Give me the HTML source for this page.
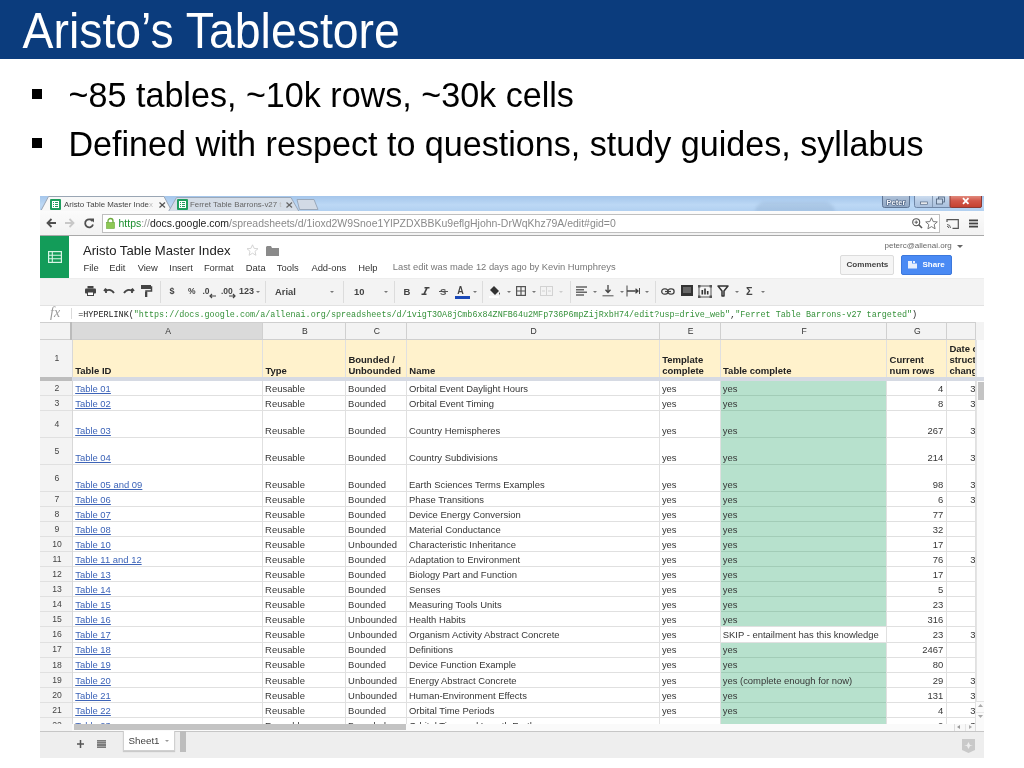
<!DOCTYPE html><html><head><meta charset="utf-8"><style>
*{margin:0;padding:0;box-sizing:border-box}
html,body{width:1024px;height:768px;overflow:hidden;background:#fff;font-family:"Liberation Sans",sans-serif}
.a{position:absolute}
.t{position:absolute;white-space:nowrap;line-height:1}
.c{position:absolute;white-space:nowrap;line-height:1;font-size:9.35px;color:#363636}
.b{font-weight:bold}
.lk{color:#3D64B8;text-decoration:underline}
svg{position:absolute;overflow:visible}
</style></head><body>
<div class="a" style="left:0;top:0;width:1024px;height:58.6px;background:#0B3C7D"></div>
<div class="t" style="left:22.5px;top:8.5px;font-size:46.4px;color:#fff;transform:scaleY(1.06);transform-origin:0 39.28px">Aristo’s Tablestore</div>
<div class="a" style="left:32px;top:89px;width:10px;height:10px;background:#000"></div>
<div class="a" style="left:32px;top:138px;width:10px;height:10px;background:#000"></div>
<div class="t" style="left:68.6px;top:77.7px;font-size:34.12px;color:#000;transform:scaleY(1.04);transform-origin:0 28.78px">~85 tables, ~10k rows, ~30k cells</div>
<div class="t" style="left:68.4px;top:127.2px;font-size:34.12px;color:#000;transform:scaleY(1.04);transform-origin:0 28.78px">Defined with respect to questions, study guides, syllabus</div>
<div class="a" style="left:40px;top:196px;width:944px;height:562.5px;background:#fff;overflow:hidden;filter:blur(0.35px)">
<div class="a" style="left:0px;top:0px;width:944px;height:15.5px;background:linear-gradient(#A5C6EB,#BCD8F5 55%,#B0CFF0)"></div>
<div class="a" style="left:715px;top:6px;width:80px;height:10px;background:rgba(70,100,140,0.13);border-radius:40px 40px 0 0;filter:blur(1.5px)"></div>
<svg style="left:0px;top:0px;" width="140" height="16" viewBox="0 0 140 16"><path d="M0.5 15.5 L8.5 0.5 L124 0.5 L132 15.5 Z" fill="#F8F8F8" stroke="#9AA6B4" stroke-width="1"/><rect x="0" y="14" width="140" height="2" fill="#F8F8F8"/></svg>
<svg style="left:128px;top:0px;" width="140" height="16" viewBox="0 0 140 16"><path d="M0.5 15.5 L8.5 1.5 L123 1.5 L131 15.5 Z" fill="#D5DDE7" stroke="#9AA8BA" stroke-width="1"/></svg>
<svg style="left:256px;top:0px;" width="30" height="16" viewBox="0 0 30 16"><path d="M3.5 13.5 L1 3.5 L18 3.5 L22 13.5 Z" fill="#D2DAE5" stroke="#9AA8BA" stroke-width="1"/></svg>
<svg style="left:10px;top:3px;" width="11" height="11" viewBox="0 0 11 11"><rect x="0" y="0" width="11" height="11" rx="1" fill="#1E9E5E"/><rect x="2.5" y="2.5" width="6" height="6" fill="none" stroke="#fff" stroke-width="1"/><line x1="2.5" y1="4.5" x2="8.5" y2="4.5" stroke="#fff" stroke-width="1"/><line x1="2.5" y1="6.5" x2="8.5" y2="6.5" stroke="#fff" stroke-width="1"/><line x1="4.5" y1="2.5" x2="4.5" y2="8.5" stroke="#fff" stroke-width="1"/></svg>
<div class="t" style="left:24px;top:4.800000000000011px;font-size:7.9px;color:#444">Aristo Table Master Inde<span style="color:#bbb">x</span></div>
<svg style="left:119px;top:6px;" width="7" height="6" viewBox="0 0 7 6"><path d="M0.5 0.5 L6 5.5 M6 0.5 L0.5 5.5" stroke="#555" stroke-width="1.2"/></svg>
<svg style="left:137px;top:3px;" width="11" height="11" viewBox="0 0 11 11"><rect x="0" y="0" width="11" height="11" rx="1" fill="#1E9E5E"/><rect x="2.5" y="2.5" width="6" height="6" fill="none" stroke="#fff" stroke-width="1"/><line x1="2.5" y1="4.5" x2="8.5" y2="4.5" stroke="#fff" stroke-width="1"/><line x1="2.5" y1="6.5" x2="8.5" y2="6.5" stroke="#fff" stroke-width="1"/><line x1="4.5" y1="2.5" x2="4.5" y2="8.5" stroke="#fff" stroke-width="1"/></svg>
<div class="t" style="left:150px;top:4.800000000000011px;font-size:7.9px;color:#666">Ferret Table Barrons-v27 <span style="color:#bbb">t</span></div>
<svg style="left:246px;top:6px;" width="7" height="6" viewBox="0 0 7 6"><path d="M0.5 0.5 L6 5.5 M6 0.5 L0.5 5.5" stroke="#666" stroke-width="1.2"/></svg>
<svg style="left:842px;top:0px;" width="102" height="13" viewBox="0 0 102 13"><defs><linearGradient id="gb" x1="0" y1="0" x2="0" y2="1"><stop offset="0" stop-color="#D5E3F3"/><stop offset="0.5" stop-color="#B9CDE6"/><stop offset="1" stop-color="#A9C0DD"/></linearGradient><linearGradient id="gp" x1="0" y1="0" x2="0" y2="1"><stop offset="0" stop-color="#B4C6DC"/><stop offset="1" stop-color="#8FA6C4"/></linearGradient><linearGradient id="gr" x1="0" y1="0" x2="0" y2="1"><stop offset="0" stop-color="#E7A092"/><stop offset="0.5" stop-color="#D2574A"/><stop offset="1" stop-color="#C4402F"/></linearGradient></defs><rect x="0.5" y="-2" width="27" height="13.5" rx="2" fill="url(#gp)" stroke="#5F7594"/><text x="14" y="9" font-family="Liberation Sans" font-size="7.5" font-weight="bold" fill="#F4F7FB" stroke="#44597A" stroke-width="1.1" paint-order="stroke" text-anchor="middle">Peter</text><rect x="32.5" y="-2" width="67" height="13.5" rx="2" fill="url(#gb)" stroke="#6F86A6"/><line x1="50.5" y1="-2" x2="50.5" y2="11" stroke="#8499B3"/><rect x="68" y="-2" width="31.5" height="13.5" rx="1.5" fill="url(#gr)" stroke="#8B3A35"/><rect x="38.5" y="6" width="7" height="2.2" fill="#fff" stroke="#4d5f78" stroke-width="0.7"/><rect x="56.5" y="1" width="6" height="5" fill="none" stroke="#4d5f78" stroke-width="0.8"/><rect x="54.5" y="3" width="6" height="5" fill="#C9D8EA" stroke="#4d5f78" stroke-width="0.8"/><path d="M81 2.2 L86.5 7.8 M86.5 2.2 L81 7.8" stroke="#fff" stroke-width="1.8"/></svg>
<div class="a" style="left:0px;top:15px;width:944px;height:24px;background:linear-gradient(#FBFBFB,#F2F2F2)"></div>
<div class="a" style="left:0px;top:39px;width:944px;height:1px;background:#A9A9A9"></div>
<div class="a" style="left:62px;top:18px;width:838px;height:19px;background:#fff;border:1px solid #BFBFBF"></div>
<svg style="left:6px;top:22px;" width="11" height="10" viewBox="0 0 11 10"><path d="M10 5 L1.5 5 M5.5 1 L1.5 5 L5.5 9" fill="none" stroke="#505050" stroke-width="1.8"/></svg>
<svg style="left:24px;top:22px;" width="11" height="10" viewBox="0 0 11 10"><path d="M1 5 L9.5 5 M5.5 1 L9.5 5 L5.5 9" fill="none" stroke="#C8C8C8" stroke-width="1.8"/></svg>
<svg style="left:44px;top:22px;" width="11" height="11" viewBox="0 0 11 11"><path d="M8.6 3.2 A4 4 0 1 0 9 6.5" fill="none" stroke="#505050" stroke-width="1.8"/><path d="M6 0.5 L10 0.5 L10 4.5 Z" fill="#505050"/></svg>
<svg style="left:66px;top:22px;" width="9" height="11" viewBox="0 0 9 11"><path d="M2 5 L2 3 A2.5 2.5 0 0 1 7 3 L7 5" fill="none" stroke="#6BAA3B" stroke-width="1.3"/><rect x="0.5" y="4.5" width="8" height="6" fill="#8DC855" stroke="#6BAA3B" stroke-width="0.6"/></svg>
<div class="t" style="left:78.5px;top:22.5px;font-size:10.48px"><span style="color:#1B8E2E">https</span><span style="color:#999">://</span><span style="color:#222">docs.google.com</span><span style="color:#8A8A8A">/spreadsheets/d/1ioxd2W9Snoe1YlPZDXBBKu9eflgHjohn-DrWqKhz79A/edit#gid=0</span></div>
<svg style="left:872px;top:22px;" width="11" height="11" viewBox="0 0 11 11"><circle cx="4.2" cy="4.2" r="3.5" fill="none" stroke="#555" stroke-width="1.1"/><path d="M2.5 4.2 L6 4.2 M4.2 2.5 L4.2 6" stroke="#555" stroke-width="0.9"/><path d="M6.8 6.8 L10 10" stroke="#555" stroke-width="1.6"/></svg>
<svg style="left:885px;top:21px;" width="13" height="13" viewBox="0 0 13 13"><path d="M6.5 0.8 L8.2 4.6 L12.3 4.9 L9.2 7.6 L10.1 11.8 L6.5 9.6 L2.9 11.8 L3.8 7.6 L0.7 4.9 L4.8 4.6 Z" fill="#fff" stroke="#6A6A6A" stroke-width="0.9"/></svg>
<svg style="left:906px;top:23px;" width="13" height="10" viewBox="0 0 13 10"><path d="M1 3 L1 0.7 L12.3 0.7 L12.3 9.3 L6.5 9.3" fill="none" stroke="#555" stroke-width="1.2"/><path d="M1 5.5 A3.5 3.5 0 0 1 4.5 9 M1 7.3 A1.7 1.7 0 0 1 2.7 9" fill="none" stroke="#555" stroke-width="0.9"/></svg>
<svg style="left:929px;top:23px;" width="9" height="9" viewBox="0 0 9 9"><rect x="0" y="0.5" width="9" height="1.8" fill="#444"/><rect x="0" y="3.6" width="9" height="1.8" fill="#444"/><rect x="0" y="6.7" width="9" height="1.8" fill="#444"/></svg>
<div class="a" style="left:0px;top:39.5px;width:29px;height:43.5px;background:#139C59"></div>
<svg style="left:8px;top:55px;" width="14" height="12" viewBox="0 0 14 12"><rect x="0.6" y="0.6" width="12.8" height="10.8" fill="none" stroke="#D9F5E5" stroke-width="1.2"/><path d="M0.6 4.2 L13.4 4.2 M0.6 7.8 L13.4 7.8 M4.3 0.6 L4.3 11.4" stroke="#D9F5E5" stroke-width="1.1"/></svg>
<div class="t" style="left:43px;top:47.80000000000001px;font-size:13.1px;color:#222">Aristo Table Master Index</div>
<svg style="left:206px;top:48px;" width="13" height="12" viewBox="0 0 13 12"><path d="M6.5 0.8 L8.1 4.4 L12 4.7 L9 7.3 L9.9 11.3 L6.5 9.2 L3.1 11.3 L4 7.3 L1 4.7 L4.9 4.4 Z" fill="none" stroke="#D0D0D0" stroke-width="0.9"/></svg>
<svg style="left:226px;top:50px;" width="13" height="10" viewBox="0 0 13 10"><path d="M0 1 L0 10 L13 10 L13 2 L6 2 L5 0 L1 0 Z" fill="#8A8A8A"/></svg>
<div class="t" style="left:43.5px;top:66.5px;font-size:9.4px;color:#333">File</div>
<div class="t" style="left:69.2px;top:66.5px;font-size:9.4px;color:#333">Edit</div>
<div class="t" style="left:97.69999999999999px;top:66.5px;font-size:9.4px;color:#333">View</div>
<div class="t" style="left:129.3px;top:66.5px;font-size:9.4px;color:#333">Insert</div>
<div class="t" style="left:163.9px;top:66.5px;font-size:9.4px;color:#333">Format</div>
<div class="t" style="left:205.8px;top:66.5px;font-size:9.4px;color:#333">Data</div>
<div class="t" style="left:236.8px;top:66.5px;font-size:9.4px;color:#333">Tools</div>
<div class="t" style="left:271.4px;top:66.5px;font-size:9.4px;color:#333">Add-ons</div>
<div class="t" style="left:318.3px;top:66.5px;font-size:9.4px;color:#333">Help</div>
<div class="t" style="left:352.8px;top:66.5px;font-size:9.35px;color:#777">Last edit was made 12 days ago by Kevin Humphreys</div>
<div class="t" style="left:844.5px;top:45.5px;font-size:8px;color:#666">peterc@allenai.org</div>
<svg style="left:917px;top:49px;" width="6" height="3" viewBox="0 0 6 3"><path d="M0 0 L6 0 L3 3 Z" fill="#666"/></svg>
<div class="a" style="left:800px;top:59px;width:54px;height:20px;background:#F5F5F5;border:1px solid #DCDCDC;border-radius:2px"></div>
<div class="t" style="left:806.5px;top:65.30000000000001px;font-size:8.1px;color:#444;font-weight:bold">Comments</div>
<div class="a" style="left:861px;top:59px;width:51px;height:20px;background:#4A8AF4;border:1px solid #3C78DC;border-radius:2px"></div>
<svg style="left:868px;top:64.5px;" width="9" height="7.5" viewBox="0 0 9 7.5"><path d="M0 0 L4 0 L4 2.5 L9 2.5 L9 7.5 L0 7.5 Z" fill="#E6EEFD"/><rect x="5" y="0" width="2" height="2" fill="#E6EEFD"/></svg>
<div class="t" style="left:882.5px;top:65.30000000000001px;font-size:8px;color:#fff;font-weight:bold">Share</div>
<div class="a" style="left:0px;top:82px;width:944px;height:28px;background:#F3F3F3;border-top:1px solid #EDEDED;border-bottom:1px solid #E2E2E2"></div>
<svg style="left:45px;top:90px;" width="11" height="10" viewBox="0 0 11 10"><rect x="2.5" y="0" width="6" height="2.5" fill="#444"/><rect x="0" y="2.5" width="11" height="5" rx="1" fill="#444"/><rect x="2.5" y="6" width="6" height="3.5" fill="#fff" stroke="#444" stroke-width="1"/></svg>
<svg style="left:63px;top:91px;" width="12" height="8" viewBox="0 0 12 8"><path d="M3 2 L3 6 M1 4 L3 1.5 M3.5 3.5 Q8 1.5 11 6" fill="none" stroke="#444" stroke-width="1.8"/></svg>
<svg style="left:83px;top:91px;" width="12" height="8" viewBox="0 0 12 8"><path d="M9 2 L9 6 M11 4 L9 1.5 M8.5 3.5 Q4 1.5 1 6" fill="none" stroke="#444" stroke-width="1.8"/></svg>
<svg style="left:101px;top:89px;" width="11" height="12" viewBox="0 0 11 12"><rect x="0" y="0" width="10" height="4" fill="#444"/><path d="M10 2 L10.5 2 L10.5 6 L5 6 L5 11" fill="none" stroke="#444" stroke-width="1.5"/><rect x="4" y="7" width="2.3" height="5" fill="#444"/></svg>
<div class="a" style="left:120px;top:85px;width:1px;height:22px;background:#DCDCDC"></div>
<div class="t" style="left:129.5px;top:91px;font-size:9px;color:#444;font-weight:bold">$</div>
<div class="t" style="left:148px;top:91px;font-size:8.5px;color:#444;font-weight:bold">%</div>
<div class="t" style="left:162.5px;top:91px;font-size:8.5px;color:#444;font-weight:bold">.0</div>
<svg style="left:170px;top:98px;" width="6" height="4" viewBox="0 0 6 4"><path d="M0 2 L6 2 M2 0 L0 2 L2 4" fill="none" stroke="#444" stroke-width="1.2"/></svg>
<div class="t" style="left:181px;top:91px;font-size:8.5px;color:#444;font-weight:bold">.00</div>
<svg style="left:189px;top:98px;" width="6" height="4" viewBox="0 0 6 4"><path d="M0 2 L6 2 M4 0 L6 2 L4 4" fill="none" stroke="#444" stroke-width="1.2"/></svg>
<div class="t" style="left:199px;top:90.80000000000001px;font-size:9px;color:#444;font-weight:bold">123</div>
<svg style="left:215.5px;top:95px;" width="4" height="2" viewBox="0 0 4 2"><path d="M0 0 L4 0 L2 2 Z" fill="#777"/></svg>
<div class="a" style="left:225px;top:85px;width:1px;height:22px;background:#DCDCDC"></div>
<div class="t" style="left:235px;top:91px;font-size:9.4px;color:#444;font-weight:bold">Arial</div>
<svg style="left:290px;top:95px;" width="4" height="2" viewBox="0 0 4 2"><path d="M0 0 L4 0 L2 2 Z" fill="#777"/></svg>
<div class="a" style="left:303px;top:85px;width:1px;height:22px;background:#DCDCDC"></div>
<div class="t" style="left:314px;top:91px;font-size:9.4px;color:#444;font-weight:bold">10</div>
<svg style="left:344px;top:95px;" width="4" height="2" viewBox="0 0 4 2"><path d="M0 0 L4 0 L2 2 Z" fill="#777"/></svg>
<div class="a" style="left:354px;top:85px;width:1px;height:22px;background:#DCDCDC"></div>
<div class="t" style="left:363.5px;top:91px;font-size:9.5px;color:#444;font-weight:bold">B</div>
<svg style="left:381px;top:91px;" width="9" height="8" viewBox="0 0 9 8"><path d="M3.5 0.8 L8.5 0.8 M0.5 7.2 L5.5 7.2 M6 0.8 L3 7.2" fill="none" stroke="#444" stroke-width="1.6"/></svg>
<div class="t" style="left:400px;top:90.80000000000001px;font-size:9.5px;color:#555;font-weight:bold">S</div>
<div class="a" style="left:399px;top:94.5px;width:9px;height:1px;background:#555"></div>
<div class="t" style="left:417px;top:90px;font-size:10px;color:#444;font-weight:bold;transform:scaleX(0.9)">A</div>
<div class="a" style="left:415px;top:100px;width:15px;height:2.5px;background:#1A49B8"></div>
<svg style="left:433px;top:95px;" width="4" height="2" viewBox="0 0 4 2"><path d="M0 0 L4 0 L2 2 Z" fill="#777"/></svg>
<div class="a" style="left:442px;top:85px;width:1px;height:22px;background:#DCDCDC"></div>
<svg style="left:449px;top:89px;" width="12" height="13" viewBox="0 0 12 13"><path d="M1 5 L5 1 L10 6 L6 10 Z" fill="#333"/><path d="M10.5 7 Q11.5 9 10.5 10 Q9.5 9 10.5 7Z" fill="#333"/><rect x="0" y="11" width="10" height="2" fill="#fff"/></svg>
<svg style="left:467px;top:95px;" width="4" height="2" viewBox="0 0 4 2"><path d="M0 0 L4 0 L2 2 Z" fill="#777"/></svg>
<svg style="left:476px;top:90px;" width="10" height="10" viewBox="0 0 10 10"><rect x="0.6" y="0.6" width="8.8" height="8.8" fill="none" stroke="#555" stroke-width="1.2"/><path d="M5 0.6 L5 9.4 M0.6 5 L9.4 5" stroke="#555" stroke-width="1.2"/></svg>
<svg style="left:492px;top:95px;" width="4" height="2" viewBox="0 0 4 2"><path d="M0 0 L4 0 L2 2 Z" fill="#777"/></svg>
<svg style="left:500px;top:90px;" width="13" height="10" viewBox="0 0 13 10"><rect x="0.5" y="0.5" width="12" height="9" fill="none" stroke="#D2D2D2" stroke-width="1"/><path d="M6.5 0.5 L6.5 9.5 M2 5 L5 5 M8 5 L11 5" stroke="#D2D2D2" stroke-width="1"/></svg>
<svg style="left:519px;top:95px;" width="4" height="2" viewBox="0 0 4 2"><path d="M0 0 L4 0 L2 2 Z" fill="#ccc"/></svg>
<div class="a" style="left:530px;top:85px;width:1px;height:22px;background:#DCDCDC"></div>
<svg style="left:536px;top:90px;" width="12" height="10" viewBox="0 0 12 10"><path d="M0 1 L11 1 M0 3.7 L8 3.7 M0 6.3 L11 6.3 M0 9 L8 9" stroke="#666" stroke-width="1.5"/></svg>
<svg style="left:553px;top:95px;" width="4" height="2" viewBox="0 0 4 2"><path d="M0 0 L4 0 L2 2 Z" fill="#777"/></svg>
<svg style="left:562px;top:89px;" width="12" height="12" viewBox="0 0 12 12"><path d="M6 0 L6 7 M3.5 4.8 L6 7.5 L8.5 4.8" fill="none" stroke="#444" stroke-width="1.3"/><path d="M0.5 10.8 L11.5 10.8" stroke="#555" stroke-width="1"/></svg>
<svg style="left:580px;top:95px;" width="4" height="2" viewBox="0 0 4 2"><path d="M0 0 L4 0 L2 2 Z" fill="#777"/></svg>
<svg style="left:586px;top:89px;" width="15" height="12" viewBox="0 0 15 12"><path d="M1 0.5 L1 11.5 M13.5 3 L13.5 9" stroke="#444" stroke-width="1"/><path d="M1 6 L12 6 M9.5 3.8 L12 6 L9.5 8.2" fill="none" stroke="#444" stroke-width="1.3"/></svg>
<svg style="left:605px;top:95px;" width="4" height="2" viewBox="0 0 4 2"><path d="M0 0 L4 0 L2 2 Z" fill="#777"/></svg>
<div class="a" style="left:615px;top:85px;width:1px;height:22px;background:#DCDCDC"></div>
<svg style="left:621px;top:92px;" width="14" height="7" viewBox="0 0 14 7"><rect x="0.7" y="0.9" width="6.3" height="5.2" rx="2.6" fill="none" stroke="#444" stroke-width="1.3"/><rect x="6.8" y="0.9" width="6.3" height="5.2" rx="2.6" fill="none" stroke="#444" stroke-width="1.3"/><path d="M4 3.5 L10 3.5" stroke="#444" stroke-width="1.2"/></svg>
<svg style="left:641px;top:89px;" width="12" height="12" viewBox="0 0 12 12"><rect x="0" y="0" width="12" height="11" fill="#333"/><rect x="2" y="2" width="8" height="6" fill="#666"/></svg>
<svg style="left:658px;top:89px;" width="14" height="13" viewBox="0 0 14 13"><rect x="1" y="1" width="12" height="11" fill="none" stroke="#555" stroke-width="1"/><path d="M4.3 9.5 L4.3 5 M7 9.5 L7 3.5 M9.7 9.5 L9.7 6" stroke="#333" stroke-width="1.6"/><rect x="0" y="0" width="2.5" height="2.5" fill="#555"/><rect x="11.5" y="0" width="2.5" height="2.5" fill="#555"/><rect x="0" y="10.5" width="2.5" height="2.5" fill="#555"/><rect x="11.5" y="10.5" width="2.5" height="2.5" fill="#555"/></svg>
<svg style="left:678px;top:90px;" width="10" height="10" viewBox="0 0 10 10"><path d="M0 0 L10 0 L6 5 L6 10 L4 10 L4 5 Z" fill="none" stroke="#333" stroke-width="1.5" stroke-linejoin="round"/></svg>
<svg style="left:695px;top:95px;" width="4" height="2" viewBox="0 0 4 2"><path d="M0 0 L4 0 L2 2 Z" fill="#777"/></svg>
<div class="t" style="left:706px;top:90px;font-size:11px;color:#444;font-weight:bold">Σ</div>
<svg style="left:721px;top:95px;" width="4" height="2" viewBox="0 0 4 2"><path d="M0 0 L4 0 L2 2 Z" fill="#777"/></svg>
<div class="a" style="left:0px;top:110px;width:944px;height:16px;background:#fff"></div>
<div class="t" style="left:10px;top:109.5px;font-size:14px;color:#999;font-family:Liberation Serif"><i>fx</i></div>
<div class="a" style="left:31px;top:112px;width:1px;height:11px;background:#DADADA"></div>
<div class="t" style="left:38.2px;top:114.80000000000001px;font-size:8.43px;font-family:Liberation Mono"><span style="color:#222">=HYPERLINK(</span><span style="color:#35913A">"https://docs.google.com/a/allenai.org/spreadsheets/d/1vigT3OA8jCmb6x84ZNFB64u2MFp736P6mpZijRxbH74/edit?usp=drive_web"</span><span style="color:#222">,</span><span style="color:#35913A">"Ferret Table Barrons-v27 targeted"</span><span style="color:#222">)</span></div>
<div class="a" style="left:0px;top:126px;width:944px;height:17.5px;background:#F3F3F3"></div>
<div class="a" style="left:32px;top:126px;width:190.5px;height:17.5px;background:#DADADA"></div>
<div class="a" style="left:0px;top:126px;width:936px;height:1px;background:#CFCFCF"></div>
<div class="a" style="left:0px;top:143px;width:936px;height:1px;background:#CFCFCF"></div>
<div class="c" style="left:33.099999999999994px;top:131.0201px;font-size:8.6px;width:190.2px;text-align:center;color:#333">A</div>
<div class="c" style="left:223.3px;top:131.0201px;font-size:8.6px;width:83.0px;text-align:center;color:#333">B</div>
<div class="c" style="left:306.3px;top:131.0201px;font-size:8.6px;width:60.89999999999998px;text-align:center;color:#333">C</div>
<div class="c" style="left:367.2px;top:131.0201px;font-size:8.6px;width:252.89999999999998px;text-align:center;color:#333">D</div>
<div class="c" style="left:620.0999999999999px;top:131.0201px;font-size:8.6px;width:60.80000000000007px;text-align:center;color:#333">E</div>
<div class="c" style="left:680.9px;top:131.0201px;font-size:8.6px;width:166.60000000000002px;text-align:center;color:#333">F</div>
<div class="c" style="left:847.5px;top:131.0201px;font-size:8.6px;width:59.799999999999955px;text-align:center;color:#333">G</div>
<div class="a" style="left:222.0px;top:126px;width:1px;height:17.5px;background:#D0D0D0"></div>
<div class="a" style="left:305.0px;top:126px;width:1px;height:17.5px;background:#D0D0D0"></div>
<div class="a" style="left:365.9px;top:126px;width:1px;height:17.5px;background:#D0D0D0"></div>
<div class="a" style="left:618.8px;top:126px;width:1px;height:17.5px;background:#D0D0D0"></div>
<div class="a" style="left:679.6px;top:126px;width:1px;height:17.5px;background:#D0D0D0"></div>
<div class="a" style="left:846.2px;top:126px;width:1px;height:17.5px;background:#D0D0D0"></div>
<div class="a" style="left:906.0px;top:126px;width:1px;height:17.5px;background:#D0D0D0"></div>
<div class="a" style="left:935.2px;top:126px;width:1px;height:17.5px;background:#D0D0D0"></div>
<div class="a" style="left:29.5px;top:126px;width:2px;height:17.5px;background:#BBBBBB"></div>
<div class="a" style="left:0;top:143.5px;width:936px;height:384.0px;overflow:hidden">
<div class="a" style="left:0px;top:0.0px;width:32px;height:38.0px;background:#F3F3F3"></div>
<div class="a" style="left:32.3px;top:0.0px;width:904px;height:37.5px;background:#FFF2CC"></div>
<div class="a" style="left:0px;top:41.0px;width:32px;height:15.300000000000011px;background:#F3F3F3"></div>
<div class="a" style="left:680.1px;top:41.0px;width:166.6px;height:15.300000000000011px;background:#B7E1CD"></div>
<div class="a" style="left:0px;top:55.80000000000001px;width:32px;height:15.5px;background:#F3F3F3"></div>
<div class="a" style="left:680.1px;top:55.80000000000001px;width:166.6px;height:15.5px;background:#B7E1CD"></div>
<div class="a" style="left:0px;top:70.80000000000001px;width:32px;height:27.44999999999999px;background:#F3F3F3"></div>
<div class="a" style="left:680.1px;top:70.80000000000001px;width:166.6px;height:27.44999999999999px;background:#B7E1CD"></div>
<div class="a" style="left:0px;top:97.75px;width:32px;height:27.44999999999999px;background:#F3F3F3"></div>
<div class="a" style="left:680.1px;top:97.75px;width:166.6px;height:27.44999999999999px;background:#B7E1CD"></div>
<div class="a" style="left:0px;top:124.69999999999999px;width:32px;height:27.5px;background:#F3F3F3"></div>
<div class="a" style="left:680.1px;top:124.69999999999999px;width:166.6px;height:27.5px;background:#B7E1CD"></div>
<div class="a" style="left:0px;top:151.7px;width:32px;height:15.579999999999984px;background:#F3F3F3"></div>
<div class="a" style="left:680.1px;top:151.7px;width:166.6px;height:15.579999999999984px;background:#B7E1CD"></div>
<div class="a" style="left:0px;top:166.77999999999997px;width:32px;height:15.580000000000041px;background:#F3F3F3"></div>
<div class="a" style="left:680.1px;top:166.77999999999997px;width:166.6px;height:15.580000000000041px;background:#B7E1CD"></div>
<div class="a" style="left:0px;top:181.86px;width:32px;height:15.579999999999927px;background:#F3F3F3"></div>
<div class="a" style="left:680.1px;top:181.86px;width:166.6px;height:15.579999999999927px;background:#B7E1CD"></div>
<div class="a" style="left:0px;top:196.93999999999994px;width:32px;height:15.580000000000041px;background:#F3F3F3"></div>
<div class="a" style="left:680.1px;top:196.93999999999994px;width:166.6px;height:15.580000000000041px;background:#B7E1CD"></div>
<div class="a" style="left:0px;top:212.01999999999998px;width:32px;height:15.580000000000041px;background:#F3F3F3"></div>
<div class="a" style="left:680.1px;top:212.01999999999998px;width:166.6px;height:15.580000000000041px;background:#B7E1CD"></div>
<div class="a" style="left:0px;top:227.10000000000002px;width:32px;height:15.579999999999927px;background:#F3F3F3"></div>
<div class="a" style="left:680.1px;top:227.10000000000002px;width:166.6px;height:15.579999999999927px;background:#B7E1CD"></div>
<div class="a" style="left:0px;top:242.17999999999995px;width:32px;height:15.580000000000041px;background:#F3F3F3"></div>
<div class="a" style="left:680.1px;top:242.17999999999995px;width:166.6px;height:15.580000000000041px;background:#B7E1CD"></div>
<div class="a" style="left:0px;top:257.26px;width:32px;height:15.580000000000041px;background:#F3F3F3"></div>
<div class="a" style="left:680.1px;top:257.26px;width:166.6px;height:15.580000000000041px;background:#B7E1CD"></div>
<div class="a" style="left:0px;top:272.34000000000003px;width:32px;height:15.579999999999927px;background:#F3F3F3"></div>
<div class="a" style="left:680.1px;top:272.34000000000003px;width:166.6px;height:15.579999999999927px;background:#B7E1CD"></div>
<div class="a" style="left:0px;top:287.41999999999996px;width:32px;height:15.580000000000041px;background:#F3F3F3"></div>
<div class="a" style="left:680.1px;top:287.41999999999996px;width:166.6px;height:15.580000000000041px;background:#fff"></div>
<div class="a" style="left:0px;top:302.5px;width:32px;height:15.579999999999927px;background:#F3F3F3"></div>
<div class="a" style="left:680.1px;top:302.5px;width:166.6px;height:15.579999999999927px;background:#B7E1CD"></div>
<div class="a" style="left:0px;top:317.5799999999999px;width:32px;height:15.580000000000041px;background:#F3F3F3"></div>
<div class="a" style="left:680.1px;top:317.5799999999999px;width:166.6px;height:15.580000000000041px;background:#B7E1CD"></div>
<div class="a" style="left:0px;top:332.65999999999997px;width:32px;height:15.580000000000041px;background:#F3F3F3"></div>
<div class="a" style="left:680.1px;top:332.65999999999997px;width:166.6px;height:15.580000000000041px;background:#B7E1CD"></div>
<div class="a" style="left:0px;top:347.74px;width:32px;height:15.579999999999927px;background:#F3F3F3"></div>
<div class="a" style="left:680.1px;top:347.74px;width:166.6px;height:15.579999999999927px;background:#B7E1CD"></div>
<div class="a" style="left:0px;top:362.81999999999994px;width:32px;height:15.580000000000041px;background:#F3F3F3"></div>
<div class="a" style="left:680.1px;top:362.81999999999994px;width:166.6px;height:15.580000000000041px;background:#B7E1CD"></div>
<div class="a" style="left:0px;top:377.9px;width:32px;height:15.580000000000041px;background:#F3F3F3"></div>
<div class="a" style="left:680.1px;top:377.9px;width:166.6px;height:15.580000000000041px;background:#B7E1CD"></div>
<div class="a" style="left:0px;top:55.30000000000001px;width:936px;height:1px;background:#E0E0E0"></div>
<div class="a" style="left:680.1px;top:55.30000000000001px;width:166.6px;height:1px;background:#A2CCB7"></div>
<div class="a" style="left:0px;top:70.30000000000001px;width:936px;height:1px;background:#E0E0E0"></div>
<div class="a" style="left:680.1px;top:70.30000000000001px;width:166.6px;height:1px;background:#A2CCB7"></div>
<div class="a" style="left:0px;top:97.25px;width:936px;height:1px;background:#E0E0E0"></div>
<div class="a" style="left:680.1px;top:97.25px;width:166.6px;height:1px;background:#A2CCB7"></div>
<div class="a" style="left:0px;top:124.19999999999999px;width:936px;height:1px;background:#E0E0E0"></div>
<div class="a" style="left:680.1px;top:124.19999999999999px;width:166.6px;height:1px;background:#A2CCB7"></div>
<div class="a" style="left:0px;top:151.2px;width:936px;height:1px;background:#E0E0E0"></div>
<div class="a" style="left:680.1px;top:151.2px;width:166.6px;height:1px;background:#A2CCB7"></div>
<div class="a" style="left:0px;top:166.27999999999997px;width:936px;height:1px;background:#E0E0E0"></div>
<div class="a" style="left:680.1px;top:166.27999999999997px;width:166.6px;height:1px;background:#A2CCB7"></div>
<div class="a" style="left:0px;top:181.36px;width:936px;height:1px;background:#E0E0E0"></div>
<div class="a" style="left:680.1px;top:181.36px;width:166.6px;height:1px;background:#A2CCB7"></div>
<div class="a" style="left:0px;top:196.43999999999994px;width:936px;height:1px;background:#E0E0E0"></div>
<div class="a" style="left:680.1px;top:196.43999999999994px;width:166.6px;height:1px;background:#A2CCB7"></div>
<div class="a" style="left:0px;top:211.51999999999998px;width:936px;height:1px;background:#E0E0E0"></div>
<div class="a" style="left:680.1px;top:211.51999999999998px;width:166.6px;height:1px;background:#A2CCB7"></div>
<div class="a" style="left:0px;top:226.60000000000002px;width:936px;height:1px;background:#E0E0E0"></div>
<div class="a" style="left:680.1px;top:226.60000000000002px;width:166.6px;height:1px;background:#A2CCB7"></div>
<div class="a" style="left:0px;top:241.67999999999995px;width:936px;height:1px;background:#E0E0E0"></div>
<div class="a" style="left:680.1px;top:241.67999999999995px;width:166.6px;height:1px;background:#A2CCB7"></div>
<div class="a" style="left:0px;top:256.76px;width:936px;height:1px;background:#E0E0E0"></div>
<div class="a" style="left:680.1px;top:256.76px;width:166.6px;height:1px;background:#A2CCB7"></div>
<div class="a" style="left:0px;top:271.84000000000003px;width:936px;height:1px;background:#E0E0E0"></div>
<div class="a" style="left:680.1px;top:271.84000000000003px;width:166.6px;height:1px;background:#A2CCB7"></div>
<div class="a" style="left:0px;top:286.91999999999996px;width:936px;height:1px;background:#E0E0E0"></div>
<div class="a" style="left:680.1px;top:286.91999999999996px;width:166.6px;height:1px;background:#E0E0E0"></div>
<div class="a" style="left:0px;top:302.0px;width:936px;height:1px;background:#E0E0E0"></div>
<div class="a" style="left:680.1px;top:302.0px;width:166.6px;height:1px;background:#E0E0E0"></div>
<div class="a" style="left:0px;top:317.0799999999999px;width:936px;height:1px;background:#E0E0E0"></div>
<div class="a" style="left:680.1px;top:317.0799999999999px;width:166.6px;height:1px;background:#A2CCB7"></div>
<div class="a" style="left:0px;top:332.15999999999997px;width:936px;height:1px;background:#E0E0E0"></div>
<div class="a" style="left:680.1px;top:332.15999999999997px;width:166.6px;height:1px;background:#A2CCB7"></div>
<div class="a" style="left:0px;top:347.24px;width:936px;height:1px;background:#E0E0E0"></div>
<div class="a" style="left:680.1px;top:347.24px;width:166.6px;height:1px;background:#A2CCB7"></div>
<div class="a" style="left:0px;top:362.31999999999994px;width:936px;height:1px;background:#E0E0E0"></div>
<div class="a" style="left:680.1px;top:362.31999999999994px;width:166.6px;height:1px;background:#A2CCB7"></div>
<div class="a" style="left:0px;top:377.4px;width:936px;height:1px;background:#E0E0E0"></div>
<div class="a" style="left:680.1px;top:377.4px;width:166.6px;height:1px;background:#A2CCB7"></div>
<div class="a" style="left:0px;top:392.48px;width:936px;height:1px;background:#E0E0E0"></div>
<div class="a" style="left:680.1px;top:392.48px;width:166.6px;height:1px;background:#A2CCB7"></div>
<div class="c" style="left:1px;top:14.67009999999999px;font-size:8.6px;width:32px;text-align:center;color:#444">1</div>
<div class="c" style="left:35.2px;top:26.358249999999998px;font-size:9.5px;font-weight:bold;color:#222">Table ID</div>
<div class="c" style="left:225.39999999999998px;top:26.358249999999998px;font-size:9.5px;font-weight:bold;color:#222">Type</div>
<div class="c" style="left:308.4px;top:15.208250000000021px;font-size:9.5px;font-weight:bold;color:#222">Bounded /</div>
<div class="c" style="left:308.4px;top:26.358249999999998px;font-size:9.5px;font-weight:bold;color:#222">Unbounded</div>
<div class="c" style="left:369.29999999999995px;top:26.358249999999998px;font-size:9.5px;font-weight:bold;color:#222">Name</div>
<div class="c" style="left:622.1999999999999px;top:15.208250000000021px;font-size:9.5px;font-weight:bold;color:#222">Template</div>
<div class="c" style="left:622.1999999999999px;top:26.358249999999998px;font-size:9.5px;font-weight:bold;color:#222">complete</div>
<div class="c" style="left:683.0px;top:26.358249999999998px;font-size:9.5px;font-weight:bold;color:#222">Table complete</div>
<div class="c" style="left:849.6px;top:15.208250000000021px;font-size:9.5px;font-weight:bold;color:#222">Current</div>
<div class="c" style="left:849.6px;top:26.358249999999998px;font-size:9.5px;font-weight:bold;color:#222">num rows</div>
<div class="c" style="left:909.4px;top:4.058249999999987px;font-size:9.5px;font-weight:bold;color:#222">Date of</div>
<div class="c" style="left:909.4px;top:15.208250000000021px;font-size:9.5px;font-weight:bold;color:#222">structure</div>
<div class="c" style="left:909.4px;top:26.358249999999998px;font-size:9.5px;font-weight:bold;color:#222">change</div>
<div class="c" style="left:1px;top:44.32009999999997px;font-size:8.6px;width:32px;text-align:center;color:#444">2</div>
<div class="c" style="left:35.2px;top:44.10057500000005px;font-size:9.45px;"><span class="lk">Table 01</span></div>
<div class="c" style="left:225.10000000000002px;top:44.10057500000005px;font-size:9.45px;">Reusable</div>
<div class="c" style="left:308.1px;top:44.10057500000005px;font-size:9.45px;">Bounded</div>
<div class="c" style="left:369.0px;top:44.10057500000005px;font-size:9.45px;">Orbital Event Daylight Hours</div>
<div class="c" style="left:621.9px;top:44.10057500000005px;font-size:9.45px;">yes</div>
<div class="c" style="left:682.7px;top:44.10057500000005px;font-size:9.45px;">yes</div>
<div class="c" style="left:846.7px;top:44.10057500000005px;font-size:9.45px;width:56.59999999999991px;text-align:right;">4</div>
<div class="c" style="left:906.5px;top:44.10057500000005px;font-size:9.45px;width:29.100000000000023px;text-align:right;">3</div>
<div class="c" style="left:1px;top:59.2201px;font-size:8.6px;width:32px;text-align:center;color:#444">3</div>
<div class="c" style="left:35.2px;top:59.10057500000005px;font-size:9.45px;"><span class="lk">Table 02</span></div>
<div class="c" style="left:225.10000000000002px;top:59.10057500000005px;font-size:9.45px;">Reusable</div>
<div class="c" style="left:308.1px;top:59.10057500000005px;font-size:9.45px;">Bounded</div>
<div class="c" style="left:369.0px;top:59.10057500000005px;font-size:9.45px;">Orbital Event Timing</div>
<div class="c" style="left:621.9px;top:59.10057500000005px;font-size:9.45px;">yes</div>
<div class="c" style="left:682.7px;top:59.10057500000005px;font-size:9.45px;">yes</div>
<div class="c" style="left:846.7px;top:59.10057500000005px;font-size:9.45px;width:56.59999999999991px;text-align:right;">8</div>
<div class="c" style="left:906.5px;top:59.10057500000005px;font-size:9.45px;width:29.100000000000023px;text-align:right;">3</div>
<div class="c" style="left:1px;top:80.19509999999997px;font-size:8.6px;width:32px;text-align:center;color:#444">4</div>
<div class="c" style="left:35.2px;top:86.05057500000004px;font-size:9.45px;"><span class="lk">Table 03</span></div>
<div class="c" style="left:225.10000000000002px;top:86.05057500000004px;font-size:9.45px;">Reusable</div>
<div class="c" style="left:308.1px;top:86.05057500000004px;font-size:9.45px;">Bounded</div>
<div class="c" style="left:369.0px;top:86.05057500000004px;font-size:9.45px;">Country Hemispheres</div>
<div class="c" style="left:621.9px;top:86.05057500000004px;font-size:9.45px;">yes</div>
<div class="c" style="left:682.7px;top:86.05057500000004px;font-size:9.45px;">yes</div>
<div class="c" style="left:846.7px;top:86.05057500000004px;font-size:9.45px;width:56.59999999999991px;text-align:right;">267</div>
<div class="c" style="left:906.5px;top:86.05057500000004px;font-size:9.45px;width:29.100000000000023px;text-align:right;">3</div>
<div class="c" style="left:1px;top:107.14510000000001px;font-size:8.6px;width:32px;text-align:center;color:#444">5</div>
<div class="c" style="left:35.2px;top:113.00057500000003px;font-size:9.45px;"><span class="lk">Table 04</span></div>
<div class="c" style="left:225.10000000000002px;top:113.00057500000003px;font-size:9.45px;">Reusable</div>
<div class="c" style="left:308.1px;top:113.00057500000003px;font-size:9.45px;">Bounded</div>
<div class="c" style="left:369.0px;top:113.00057500000003px;font-size:9.45px;">Country Subdivisions</div>
<div class="c" style="left:621.9px;top:113.00057500000003px;font-size:9.45px;">yes</div>
<div class="c" style="left:682.7px;top:113.00057500000003px;font-size:9.45px;">yes</div>
<div class="c" style="left:846.7px;top:113.00057500000003px;font-size:9.45px;width:56.59999999999991px;text-align:right;">214</div>
<div class="c" style="left:906.5px;top:113.00057500000003px;font-size:9.45px;width:29.100000000000023px;text-align:right;">3</div>
<div class="c" style="left:1px;top:134.12009999999998px;font-size:8.6px;width:32px;text-align:center;color:#444">6</div>
<div class="c" style="left:35.2px;top:140.00057500000003px;font-size:9.45px;"><span class="lk">Table 05 and 09</span></div>
<div class="c" style="left:225.10000000000002px;top:140.00057500000003px;font-size:9.45px;">Reusable</div>
<div class="c" style="left:308.1px;top:140.00057500000003px;font-size:9.45px;">Bounded</div>
<div class="c" style="left:369.0px;top:140.00057500000003px;font-size:9.45px;">Earth Sciences Terms Examples</div>
<div class="c" style="left:621.9px;top:140.00057500000003px;font-size:9.45px;">yes</div>
<div class="c" style="left:682.7px;top:140.00057500000003px;font-size:9.45px;">yes</div>
<div class="c" style="left:846.7px;top:140.00057500000003px;font-size:9.45px;width:56.59999999999991px;text-align:right;">98</div>
<div class="c" style="left:906.5px;top:140.00057500000003px;font-size:9.45px;width:29.100000000000023px;text-align:right;">3</div>
<div class="c" style="left:1px;top:155.1601px;font-size:8.6px;width:32px;text-align:center;color:#444">7</div>
<div class="c" style="left:35.2px;top:155.080575px;font-size:9.45px;"><span class="lk">Table 06</span></div>
<div class="c" style="left:225.10000000000002px;top:155.080575px;font-size:9.45px;">Reusable</div>
<div class="c" style="left:308.1px;top:155.080575px;font-size:9.45px;">Bounded</div>
<div class="c" style="left:369.0px;top:155.080575px;font-size:9.45px;">Phase Transitions</div>
<div class="c" style="left:621.9px;top:155.080575px;font-size:9.45px;">yes</div>
<div class="c" style="left:682.7px;top:155.080575px;font-size:9.45px;">yes</div>
<div class="c" style="left:846.7px;top:155.080575px;font-size:9.45px;width:56.59999999999991px;text-align:right;">6</div>
<div class="c" style="left:906.5px;top:155.080575px;font-size:9.45px;width:29.100000000000023px;text-align:right;">3</div>
<div class="c" style="left:1px;top:170.24009999999998px;font-size:8.6px;width:32px;text-align:center;color:#444">8</div>
<div class="c" style="left:35.2px;top:170.160575px;font-size:9.45px;"><span class="lk">Table 07</span></div>
<div class="c" style="left:225.10000000000002px;top:170.160575px;font-size:9.45px;">Reusable</div>
<div class="c" style="left:308.1px;top:170.160575px;font-size:9.45px;">Bounded</div>
<div class="c" style="left:369.0px;top:170.160575px;font-size:9.45px;">Device Energy Conversion</div>
<div class="c" style="left:621.9px;top:170.160575px;font-size:9.45px;">yes</div>
<div class="c" style="left:682.7px;top:170.160575px;font-size:9.45px;">yes</div>
<div class="c" style="left:846.7px;top:170.160575px;font-size:9.45px;width:56.59999999999991px;text-align:right;">77</div>
<div class="c" style="left:1px;top:185.32010000000002px;font-size:8.6px;width:32px;text-align:center;color:#444">9</div>
<div class="c" style="left:35.2px;top:185.24057499999992px;font-size:9.45px;"><span class="lk">Table 08</span></div>
<div class="c" style="left:225.10000000000002px;top:185.24057499999992px;font-size:9.45px;">Reusable</div>
<div class="c" style="left:308.1px;top:185.24057499999992px;font-size:9.45px;">Bounded</div>
<div class="c" style="left:369.0px;top:185.24057499999992px;font-size:9.45px;">Material Conductance</div>
<div class="c" style="left:621.9px;top:185.24057499999992px;font-size:9.45px;">yes</div>
<div class="c" style="left:682.7px;top:185.24057499999992px;font-size:9.45px;">yes</div>
<div class="c" style="left:846.7px;top:185.24057499999992px;font-size:9.45px;width:56.59999999999991px;text-align:right;">32</div>
<div class="c" style="left:1px;top:200.40010000000007px;font-size:8.6px;width:32px;text-align:center;color:#444">10</div>
<div class="c" style="left:35.2px;top:200.32057499999996px;font-size:9.45px;"><span class="lk">Table 10</span></div>
<div class="c" style="left:225.10000000000002px;top:200.32057499999996px;font-size:9.45px;">Reusable</div>
<div class="c" style="left:308.1px;top:200.32057499999996px;font-size:9.45px;">Unbounded</div>
<div class="c" style="left:369.0px;top:200.32057499999996px;font-size:9.45px;">Characteristic Inheritance</div>
<div class="c" style="left:621.9px;top:200.32057499999996px;font-size:9.45px;">yes</div>
<div class="c" style="left:682.7px;top:200.32057499999996px;font-size:9.45px;">yes</div>
<div class="c" style="left:846.7px;top:200.32057499999996px;font-size:9.45px;width:56.59999999999991px;text-align:right;">17</div>
<div class="c" style="left:1px;top:215.4801px;font-size:8.6px;width:32px;text-align:center;color:#444">11</div>
<div class="c" style="left:35.2px;top:215.400575px;font-size:9.45px;"><span class="lk">Table 11 and 12</span></div>
<div class="c" style="left:225.10000000000002px;top:215.400575px;font-size:9.45px;">Reusable</div>
<div class="c" style="left:308.1px;top:215.400575px;font-size:9.45px;">Bounded</div>
<div class="c" style="left:369.0px;top:215.400575px;font-size:9.45px;">Adaptation to Environment</div>
<div class="c" style="left:621.9px;top:215.400575px;font-size:9.45px;">yes</div>
<div class="c" style="left:682.7px;top:215.400575px;font-size:9.45px;">yes</div>
<div class="c" style="left:846.7px;top:215.400575px;font-size:9.45px;width:56.59999999999991px;text-align:right;">76</div>
<div class="c" style="left:906.5px;top:215.400575px;font-size:9.45px;width:29.100000000000023px;text-align:right;">3</div>
<div class="c" style="left:1px;top:230.56010000000003px;font-size:8.6px;width:32px;text-align:center;color:#444">12</div>
<div class="c" style="left:35.2px;top:230.48057499999993px;font-size:9.45px;"><span class="lk">Table 13</span></div>
<div class="c" style="left:225.10000000000002px;top:230.48057499999993px;font-size:9.45px;">Reusable</div>
<div class="c" style="left:308.1px;top:230.48057499999993px;font-size:9.45px;">Bounded</div>
<div class="c" style="left:369.0px;top:230.48057499999993px;font-size:9.45px;">Biology Part and Function</div>
<div class="c" style="left:621.9px;top:230.48057499999993px;font-size:9.45px;">yes</div>
<div class="c" style="left:682.7px;top:230.48057499999993px;font-size:9.45px;">yes</div>
<div class="c" style="left:846.7px;top:230.48057499999993px;font-size:9.45px;width:56.59999999999991px;text-align:right;">17</div>
<div class="c" style="left:1px;top:245.64010000000007px;font-size:8.6px;width:32px;text-align:center;color:#444">13</div>
<div class="c" style="left:35.2px;top:245.56057499999997px;font-size:9.45px;"><span class="lk">Table 14</span></div>
<div class="c" style="left:225.10000000000002px;top:245.56057499999997px;font-size:9.45px;">Reusable</div>
<div class="c" style="left:308.1px;top:245.56057499999997px;font-size:9.45px;">Bounded</div>
<div class="c" style="left:369.0px;top:245.56057499999997px;font-size:9.45px;">Senses</div>
<div class="c" style="left:621.9px;top:245.56057499999997px;font-size:9.45px;">yes</div>
<div class="c" style="left:682.7px;top:245.56057499999997px;font-size:9.45px;">yes</div>
<div class="c" style="left:846.7px;top:245.56057499999997px;font-size:9.45px;width:56.59999999999991px;text-align:right;">5</div>
<div class="c" style="left:1px;top:260.7201px;font-size:8.6px;width:32px;text-align:center;color:#444">14</div>
<div class="c" style="left:35.2px;top:260.640575px;font-size:9.45px;"><span class="lk">Table 15</span></div>
<div class="c" style="left:225.10000000000002px;top:260.640575px;font-size:9.45px;">Reusable</div>
<div class="c" style="left:308.1px;top:260.640575px;font-size:9.45px;">Bounded</div>
<div class="c" style="left:369.0px;top:260.640575px;font-size:9.45px;">Measuring Tools Units</div>
<div class="c" style="left:621.9px;top:260.640575px;font-size:9.45px;">yes</div>
<div class="c" style="left:682.7px;top:260.640575px;font-size:9.45px;">yes</div>
<div class="c" style="left:846.7px;top:260.640575px;font-size:9.45px;width:56.59999999999991px;text-align:right;">23</div>
<div class="c" style="left:1px;top:275.80010000000004px;font-size:8.6px;width:32px;text-align:center;color:#444">15</div>
<div class="c" style="left:35.2px;top:275.72057499999994px;font-size:9.45px;"><span class="lk">Table 16</span></div>
<div class="c" style="left:225.10000000000002px;top:275.72057499999994px;font-size:9.45px;">Reusable</div>
<div class="c" style="left:308.1px;top:275.72057499999994px;font-size:9.45px;">Unbounded</div>
<div class="c" style="left:369.0px;top:275.72057499999994px;font-size:9.45px;">Health Habits</div>
<div class="c" style="left:621.9px;top:275.72057499999994px;font-size:9.45px;">yes</div>
<div class="c" style="left:682.7px;top:275.72057499999994px;font-size:9.45px;">yes</div>
<div class="c" style="left:846.7px;top:275.72057499999994px;font-size:9.45px;width:56.59999999999991px;text-align:right;">316</div>
<div class="c" style="left:1px;top:290.8801000000001px;font-size:8.6px;width:32px;text-align:center;color:#444">16</div>
<div class="c" style="left:35.2px;top:290.800575px;font-size:9.45px;"><span class="lk">Table 17</span></div>
<div class="c" style="left:225.10000000000002px;top:290.800575px;font-size:9.45px;">Reusable</div>
<div class="c" style="left:308.1px;top:290.800575px;font-size:9.45px;">Unbounded</div>
<div class="c" style="left:369.0px;top:290.800575px;font-size:9.45px;">Organism Activity Abstract Concrete</div>
<div class="c" style="left:621.9px;top:290.800575px;font-size:9.45px;">yes</div>
<div class="c" style="left:682.7px;top:290.800575px;font-size:9.45px;">SKIP - entailment has this knowledge</div>
<div class="c" style="left:846.7px;top:290.800575px;font-size:9.45px;width:56.59999999999991px;text-align:right;">23</div>
<div class="c" style="left:906.5px;top:290.800575px;font-size:9.45px;width:29.100000000000023px;text-align:right;">3</div>
<div class="c" style="left:1px;top:305.9601px;font-size:8.6px;width:32px;text-align:center;color:#444">17</div>
<div class="c" style="left:35.2px;top:305.8805749999999px;font-size:9.45px;"><span class="lk">Table 18</span></div>
<div class="c" style="left:225.10000000000002px;top:305.8805749999999px;font-size:9.45px;">Reusable</div>
<div class="c" style="left:308.1px;top:305.8805749999999px;font-size:9.45px;">Bounded</div>
<div class="c" style="left:369.0px;top:305.8805749999999px;font-size:9.45px;">Definitions</div>
<div class="c" style="left:621.9px;top:305.8805749999999px;font-size:9.45px;">yes</div>
<div class="c" style="left:682.7px;top:305.8805749999999px;font-size:9.45px;">yes</div>
<div class="c" style="left:846.7px;top:305.8805749999999px;font-size:9.45px;width:56.59999999999991px;text-align:right;">2467</div>
<div class="c" style="left:1px;top:321.04009999999994px;font-size:8.6px;width:32px;text-align:center;color:#444">18</div>
<div class="c" style="left:35.2px;top:320.96057499999995px;font-size:9.45px;"><span class="lk">Table 19</span></div>
<div class="c" style="left:225.10000000000002px;top:320.96057499999995px;font-size:9.45px;">Reusable</div>
<div class="c" style="left:308.1px;top:320.96057499999995px;font-size:9.45px;">Bounded</div>
<div class="c" style="left:369.0px;top:320.96057499999995px;font-size:9.45px;">Device Function Example</div>
<div class="c" style="left:621.9px;top:320.96057499999995px;font-size:9.45px;">yes</div>
<div class="c" style="left:682.7px;top:320.96057499999995px;font-size:9.45px;">yes</div>
<div class="c" style="left:846.7px;top:320.96057499999995px;font-size:9.45px;width:56.59999999999991px;text-align:right;">80</div>
<div class="c" style="left:1px;top:336.1201000000001px;font-size:8.6px;width:32px;text-align:center;color:#444">19</div>
<div class="c" style="left:35.2px;top:336.040575px;font-size:9.45px;"><span class="lk">Table 20</span></div>
<div class="c" style="left:225.10000000000002px;top:336.040575px;font-size:9.45px;">Reusable</div>
<div class="c" style="left:308.1px;top:336.040575px;font-size:9.45px;">Unbounded</div>
<div class="c" style="left:369.0px;top:336.040575px;font-size:9.45px;">Energy Abstract Concrete</div>
<div class="c" style="left:621.9px;top:336.040575px;font-size:9.45px;">yes</div>
<div class="c" style="left:682.7px;top:336.040575px;font-size:9.45px;">yes (complete enough for now)</div>
<div class="c" style="left:846.7px;top:336.040575px;font-size:9.45px;width:56.59999999999991px;text-align:right;">29</div>
<div class="c" style="left:906.5px;top:336.040575px;font-size:9.45px;width:29.100000000000023px;text-align:right;">3</div>
<div class="c" style="left:1px;top:351.2001px;font-size:8.6px;width:32px;text-align:center;color:#444">20</div>
<div class="c" style="left:35.2px;top:351.1205749999999px;font-size:9.45px;"><span class="lk">Table 21</span></div>
<div class="c" style="left:225.10000000000002px;top:351.1205749999999px;font-size:9.45px;">Reusable</div>
<div class="c" style="left:308.1px;top:351.1205749999999px;font-size:9.45px;">Unbounded</div>
<div class="c" style="left:369.0px;top:351.1205749999999px;font-size:9.45px;">Human-Environment Effects</div>
<div class="c" style="left:621.9px;top:351.1205749999999px;font-size:9.45px;">yes</div>
<div class="c" style="left:682.7px;top:351.1205749999999px;font-size:9.45px;">yes</div>
<div class="c" style="left:846.7px;top:351.1205749999999px;font-size:9.45px;width:56.59999999999991px;text-align:right;">131</div>
<div class="c" style="left:906.5px;top:351.1205749999999px;font-size:9.45px;width:29.100000000000023px;text-align:right;">3</div>
<div class="c" style="left:1px;top:366.28009999999995px;font-size:8.6px;width:32px;text-align:center;color:#444">21</div>
<div class="c" style="left:35.2px;top:366.20057499999996px;font-size:9.45px;"><span class="lk">Table 22</span></div>
<div class="c" style="left:225.10000000000002px;top:366.20057499999996px;font-size:9.45px;">Reusable</div>
<div class="c" style="left:308.1px;top:366.20057499999996px;font-size:9.45px;">Bounded</div>
<div class="c" style="left:369.0px;top:366.20057499999996px;font-size:9.45px;">Orbital Time Periods</div>
<div class="c" style="left:621.9px;top:366.20057499999996px;font-size:9.45px;">yes</div>
<div class="c" style="left:682.7px;top:366.20057499999996px;font-size:9.45px;">yes</div>
<div class="c" style="left:846.7px;top:366.20057499999996px;font-size:9.45px;width:56.59999999999991px;text-align:right;">4</div>
<div class="c" style="left:906.5px;top:366.20057499999996px;font-size:9.45px;width:29.100000000000023px;text-align:right;">3</div>
<div class="c" style="left:1px;top:381.3601000000001px;font-size:8.6px;width:32px;text-align:center;color:#444">22</div>
<div class="c" style="left:35.2px;top:381.280575px;font-size:9.45px;"><span class="lk">Table 23</span></div>
<div class="c" style="left:225.10000000000002px;top:381.280575px;font-size:9.45px;">Reusable</div>
<div class="c" style="left:308.1px;top:381.280575px;font-size:9.45px;">Bounded</div>
<div class="c" style="left:369.0px;top:381.280575px;font-size:9.45px;">Orbital Time and Length Earth</div>
<div class="c" style="left:621.9px;top:381.280575px;font-size:9.45px;">yes</div>
<div class="c" style="left:682.7px;top:381.280575px;font-size:9.45px;">yes</div>
<div class="c" style="left:846.7px;top:381.280575px;font-size:9.45px;width:56.59999999999991px;text-align:right;">2</div>
<div class="c" style="left:906.5px;top:381.280575px;font-size:9.45px;width:29.100000000000023px;text-align:right;">3</div>
<div class="a" style="left:222.0px;top:0.0px;width:1px;height:384.0px;background:#E0E0E0"></div>
<div class="a" style="left:305.0px;top:0.0px;width:1px;height:384.0px;background:#E0E0E0"></div>
<div class="a" style="left:365.9px;top:0.0px;width:1px;height:384.0px;background:#E0E0E0"></div>
<div class="a" style="left:618.8px;top:0.0px;width:1px;height:384.0px;background:#E0E0E0"></div>
<div class="a" style="left:679.6px;top:0.0px;width:1px;height:384.0px;background:#E0E0E0"></div>
<div class="a" style="left:846.2px;top:0.0px;width:1px;height:384.0px;background:#E0E0E0"></div>
<div class="a" style="left:906.0px;top:0.0px;width:1px;height:384.0px;background:#E0E0E0"></div>
<div class="a" style="left:935.2px;top:0.0px;width:1px;height:384.0px;background:#E0E0E0"></div>
<div class="a" style="left:31.799999999999997px;top:0.0px;width:1px;height:384.0px;background:#D8D8D8"></div>
<div class="a" style="left:0px;top:37.5px;width:32px;height:3.5px;background:#BDBDBD"></div>
<div class="a" style="left:32px;top:37.5px;width:912px;height:3.5px;background:#D6DAE3"></div>
</div>
<div class="a" style="left:936px;top:126px;width:8px;height:17.5px;background:#F3F3F3"></div>
<div class="a" style="left:935.5px;top:143.5px;width:8.5px;height:384px;background:#FBFBFB;border-left:1px solid #E4E4E4"></div>
<div class="a" style="left:936px;top:181.0px;width:8px;height:3.5px;background:#D6DAE3"></div>
<div class="a" style="left:937.5px;top:185.5px;width:6px;height:18px;background:#C4C4C4"></div>
<div class="a" style="left:936px;top:504.5px;width:8px;height:23px;background:#FAFAFA;border-top:1px solid #E2E2E2"></div>
<div class="a" style="left:936px;top:515.5px;width:8px;height:1px;background:#E8E8E8"></div>
<svg style="left:938px;top:508px;" width="5" height="3" viewBox="0 0 5 3"><path d="M0 3 L5 3 L2.5 0 Z" fill="#A8A8A8"/></svg>
<svg style="left:938px;top:519px;" width="5" height="3" viewBox="0 0 5 3"><path d="M0 0 L5 0 L2.5 3 Z" fill="#A8A8A8"/></svg>
<div class="a" style="left:0px;top:527.5px;width:944px;height:7.5px;background:#FAFAFA"></div>
<div class="a" style="left:0px;top:527.5px;width:32px;height:7.5px;background:#F3F3F3"></div>
<div class="a" style="left:34px;top:527.7px;width:332.4px;height:6.5px;background:#C3C3C3"></div>
<div class="a" style="left:913.5px;top:527.5px;width:22px;height:7.5px;background:#F8F8F8;border-left:1px solid #DDDDDD;border-right:1px solid #DDDDDD"></div>
<div class="a" style="left:924.5px;top:527.5px;width:1px;height:7.5px;background:#E4E4E4"></div>
<svg style="left:917px;top:529px;" width="3" height="4" viewBox="0 0 3 4"><path d="M3 0 L3 4 L0 2 Z" fill="#999"/></svg>
<svg style="left:929px;top:529px;" width="3" height="4" viewBox="0 0 3 4"><path d="M0 0 L0 4 L3 2 Z" fill="#AAA"/></svg>
<div class="a" style="left:0px;top:535px;width:944px;height:27px;background:#EEEEEE;border-top:1px solid #C6C6C6"></div>
<svg style="left:37px;top:544px;" width="7" height="8" viewBox="0 0 7 8"><path d="M3.5 0 L3.5 8 M0 4 L7 4" stroke="#555" stroke-width="1.5"/></svg>
<svg style="left:57px;top:544px;" width="9" height="8" viewBox="0 0 9 8"><path d="M0 0.8 L9 0.8 M0 2.9 L9 2.9 M0 5 L9 5 M0 7.1 L9 7.1" stroke="#555" stroke-width="1.3"/></svg>
<div class="a" style="left:82.5px;top:535px;width:52px;height:20px;background:#fff;border:1px solid #D0D0D0;border-top:none;box-shadow:0 1px 1px rgba(0,0,0,0.15)"></div>
<div class="t" style="left:88.5px;top:539.5px;font-size:9.8px;color:#444">Sheet1</div>
<svg style="left:125px;top:544px;" width="4" height="2" viewBox="0 0 4 2"><path d="M0 0 L4 0 L2 2 Z" fill="#999"/></svg>
<div class="a" style="left:140px;top:535px;width:6px;height:20.5px;background:#BDBDBD"></div>
<svg style="left:922px;top:543px;" width="13" height="14" viewBox="0 0 13 14"><path d="M0 0 L13 0 L13 11 L6.5 14 L0 11 Z" fill="#C9C9C9"/><path d="M6.5 3 L8 6 L11 6.5 L8 7 L6.5 10 L5 7 L2 6.5 L5 6 Z" fill="#EDEDED"/></svg>
</div>
</body></html>
